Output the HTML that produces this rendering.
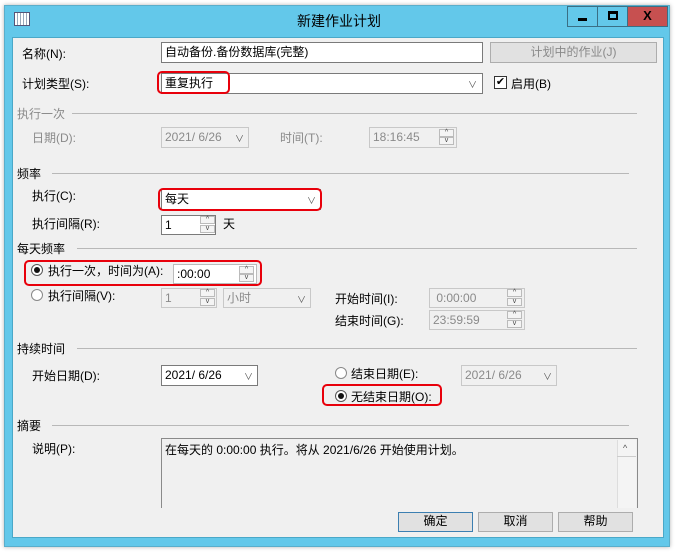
<!DOCTYPE html>
<html><head><meta charset="utf-8"><style>
*{box-sizing:border-box;margin:0;padding:0}
body{width:678px;height:552px;background:#fff;position:relative;overflow:hidden;font-family:"Liberation Sans","Noto Sans CJK SC",sans-serif;font-size:12px;color:#000}
.a{position:absolute;white-space:nowrap}
.frame{left:4px;top:5px;width:666px;height:542px;background:#63c8ea;border:1px solid #5aaecb;box-shadow:0 0 4px rgba(0,0,0,.3)}
.client{left:12px;top:37px;width:652px;height:501px;background:#f0f0f0;border:1px solid #4aa8c8}
.in{background:#fff;border:1px solid #7a7a7a;height:21px;padding:2px 3px;line-height:15px}
.dis{background:#f0f0f0;border:1px solid #c8c8c8;color:#8a8a8a}
.g{color:#8a8a8a}
.line{height:1px;background:#b8b8b8}
.red{border:2px solid #e8000b;border-radius:5px}
.btn{background:#e1e1e1;border:1px solid #adadad;text-align:center;line-height:17px;height:20px}
.radio{width:12px;height:12px;border:1px solid #555;border-radius:50%;background:#fff}
.dot{width:6px;height:6px;border-radius:50%;background:#111;margin:2px}
.arr{font-size:9px;color:#555}
.sp{position:absolute;width:15px;height:8px;border:1px solid #bbb;background:#f4f4f4;font-size:7px;line-height:6px;text-align:center;color:#444}
</style></head><body>
<div class="a frame"></div>
<div class="a" style="left:14px;top:12px;width:16px;height:14px;border:1px solid #557;background:repeating-linear-gradient(90deg,#fff 0 2px,#9ab 2px 3px),#fff"></div>
<div class="a" style="left:0;width:678px;top:11px;text-align:center;font-size:14px;color:#000">新建作业计划</div>
<div class="a" style="left:567px;top:6px;width:31px;height:21px;border:1px solid #3a6f85;background:#63c8ea"><div style="margin:11px auto 0;width:9px;height:3px;background:#000"></div></div>
<div class="a" style="left:597px;top:6px;width:31px;height:21px;border:1px solid #3a6f85;background:#63c8ea"><div style="margin:4px auto 0;width:10px;height:9px;border:2px solid #000;border-top-width:3px"></div></div>
<div class="a" style="left:627px;top:6px;width:41px;height:21px;background:#c75050;border:1px solid #3a6f85;color:#000;font-weight:bold;text-align:center;line-height:18px;font-size:13px">X</div>
<div class="a client"></div>

<div class="a" style="left:22px;top:45px">名称(N):</div>
<div class="a in" style="left:161px;top:42px;width:322px">自动备份.备份数据库(完整)</div>
<div class="a btn dis" style="left:490px;top:42px;width:167px;height:21px;line-height:18px">计划中的作业(J)</div>

<div class="a" style="left:22px;top:75px">计划类型(S):</div>
<div class="a in" style="left:161px;top:73px;width:322px">重复执行</div>
<div class="a arr" style="left:468px;top:78px">∨</div>
<div class="a red" style="left:157px;top:71px;width:73px;height:23px"></div>
<div class="a" style="left:494px;top:76px;width:13px;height:13px;border:1px solid #333;background:#fff;font-size:11px;line-height:11px;text-align:center">✔</div>
<div class="a" style="left:511px;top:75px">启用(B)</div>

<div class="a g" style="left:17px;top:105px">执行一次</div><div class="a line" style="left:72px;top:113px;width:565px"></div>
<div class="a g" style="left:32px;top:129px">日期(D):</div>
<div class="a in dis" style="left:161px;top:127px;width:88px">2021/ 6/26</div><div class="a arr g" style="left:235px;top:132px">∨</div>
<div class="a g" style="left:280px;top:129px">时间(T):</div>
<div class="a in dis" style="left:369px;top:127px;width:88px">18:16:45</div>
<div class="sp" style="left:439px;top:129px">^</div><div class="sp" style="left:439px;top:137px">v</div>

<div class="a" style="left:17px;top:165px">频率</div><div class="a line" style="left:52px;top:173px;width:577px"></div>
<div class="a" style="left:32px;top:187px">执行(C):</div>
<div class="a in" style="left:161px;top:189px;width:160px">每天</div><div class="a arr" style="left:307px;top:194px">∨</div>
<div class="a red" style="left:158px;top:188px;width:164px;height:23px"></div>
<div class="a" style="left:32px;top:215px">执行间隔(R):</div>
<div class="a in" style="left:161px;top:215px;width:55px;height:20px">1</div>
<div class="sp" style="left:200px;top:216px">^</div><div class="sp" style="left:200px;top:225px">v</div>
<div class="a" style="left:223px;top:215px">天</div>

<div class="a" style="left:17px;top:240px">每天频率</div><div class="a line" style="left:77px;top:248px;width:560px"></div>
<div class="a radio" style="left:31px;top:264px"><div class="dot"></div></div>
<div class="a" style="left:48px;top:262px">执行一次，时间为(A):</div>
<div class="a in" style="left:173px;top:264px;width:84px;height:20px;border-color:#bbb">:00:00</div>
<div class="sp" style="left:239px;top:266px">^</div><div class="sp" style="left:239px;top:274px">v</div>
<div class="a red" style="left:24px;top:260px;width:238px;height:26px"></div>
<div class="a radio" style="left:31px;top:289px;border-color:#888"></div>
<div class="a" style="left:48px;top:287px">执行间隔(V):</div>
<div class="a in dis" style="left:161px;top:288px;width:56px;height:20px">1</div>
<div class="sp" style="left:200px;top:289px">^</div><div class="sp" style="left:200px;top:298px">v</div>
<div class="a in dis" style="left:223px;top:288px;width:88px;height:20px">小时</div><div class="a arr g" style="left:297px;top:293px">∨</div>
<div class="a" style="left:335px;top:290px">开始时间(I):</div>
<div class="a in dis" style="left:429px;top:288px;width:96px;height:20px">&nbsp;0:00:00</div>
<div class="sp" style="left:507px;top:289px">^</div><div class="sp" style="left:507px;top:298px">v</div>
<div class="a" style="left:335px;top:312px">结束时间(G):</div>
<div class="a in dis" style="left:429px;top:310px;width:96px;height:20px">23:59:59</div>
<div class="sp" style="left:507px;top:311px">^</div><div class="sp" style="left:507px;top:320px">v</div>

<div class="a" style="left:17px;top:340px">持续时间</div><div class="a line" style="left:77px;top:348px;width:560px"></div>
<div class="a" style="left:32px;top:367px">开始日期(D):</div>
<div class="a in" style="left:161px;top:365px;width:97px">2021/ 6/26</div><div class="a arr" style="left:244px;top:370px">∨</div>
<div class="a radio" style="left:335px;top:367px;border-color:#888"></div>
<div class="a" style="left:351px;top:365px">结束日期(E):</div>
<div class="a in dis" style="left:461px;top:365px;width:96px">2021/ 6/26</div><div class="a arr g" style="left:543px;top:370px">∨</div>
<div class="a radio" style="left:335px;top:390px"><div class="dot"></div></div>
<div class="a" style="left:351px;top:388px">无结束日期(O):</div>
<div class="a red" style="left:322px;top:384px;width:120px;height:22px"></div>

<div class="a" style="left:17px;top:417px">摘要</div><div class="a line" style="left:52px;top:425px;width:577px"></div>
<div class="a" style="left:32px;top:440px">说明(P):</div>
<div class="a" style="left:161px;top:438px;width:477px;height:70px;border:1px solid #8a8a8a;border-bottom:none;background:#f0f0f0;padding:2px 3px">在每天的 0:00:00 执行。将从 2021/6/26 开始使用计划。</div>
<div class="a" style="left:617px;top:440px;width:19px;height:68px;border-left:1px solid #ddd;background:#f4f4f4"></div>
<div class="a" style="left:617px;top:456px;width:19px;height:1px;background:#ccc"></div>
<div class="a arr" style="left:623px;top:443px">^</div>

<div class="a btn" style="left:398px;top:512px;width:75px;border-color:#3c7fb1">确定</div>
<div class="a btn" style="left:478px;top:512px;width:75px">取消</div>
<div class="a btn" style="left:558px;top:512px;width:75px">帮助</div>
</body></html>
